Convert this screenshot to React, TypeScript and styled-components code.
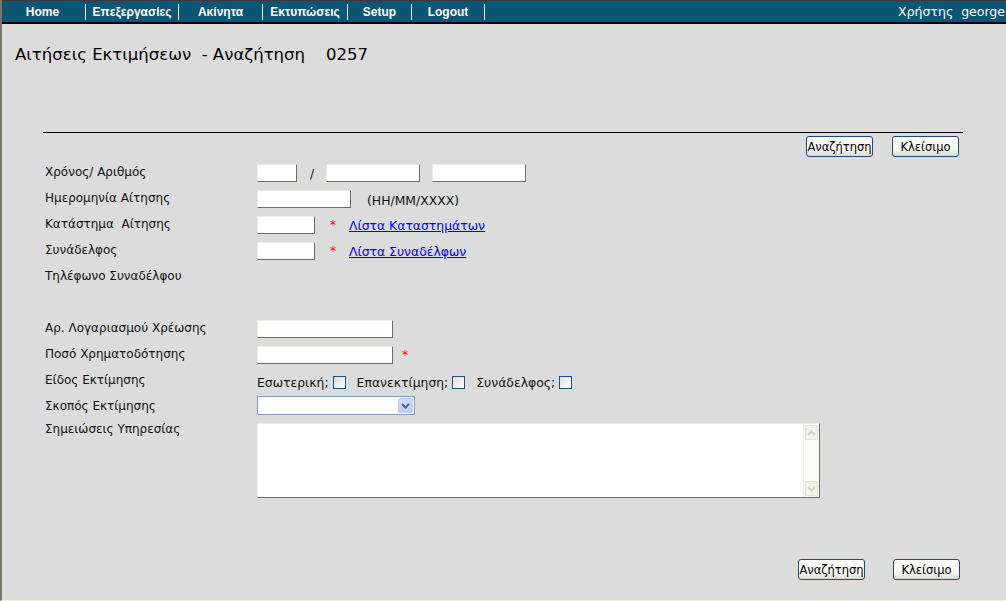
import styled, { createGlobalStyle } from 'styled-components';

const GlobalStyle = createGlobalStyle`
  html, body {
    margin: 0;
    padding: 0;
    background: #dcdcdc;
  }
  * {
    box-sizing: border-box;
  }
`;

const FONT = `"DejaVu Sans", Verdana, sans-serif`;

const navItems = [
  { label: 'Home', width: 84 },
  { label: 'Επεξεργασίες', width: 93 },
  { label: 'Ακίνητα', width: 84 },
  { label: 'Εκτυπώσεις', width: 85 },
  { label: 'Setup', width: 64 },
  { label: 'Logout', width: 73 },
];

const Chevron = ({ up, color }: { up?: boolean; color: string }) => (
  <svg width="9" height="6" viewBox="0 0 9 6">
    <path
      d={up ? 'M1 5 L4.5 1.5 L8 5' : 'M1 1 L4.5 4.5 L8 1'}
      fill="none"
      stroke={color}
      strokeWidth="2"
    />
  </svg>
);

export default function App() {
  return (
    <>
      <GlobalStyle />
      <Page>
        <NavBar>
          {navItems.map((item) => (
            <NavItem key={item.label} w={item.width}>
              {item.label}
            </NavItem>
          ))}
          <UserName>Χρήστης&nbsp;&nbsp;george</UserName>
        </NavBar>

        <Title>Αιτήσεις Εκτιμήσεων&nbsp;&nbsp;- Αναζήτηση&nbsp;&nbsp;&nbsp;&nbsp;0257</Title>

        <Content>
          <Divider />
          <ButtonBar gap={19} right={4}>
            <Button>Αναζήτηση</Button>
            <Button>Κλείσιμο</Button>
          </ButtonBar>

          <Form>
            <Label>Χρόνος/ Αριθμός</Label>
            <Field>
              <TextInput w={40} />
              <Slash>/</Slash>
              <TextInput w={94} />
              <TextInput w={94} style={{ marginLeft: 12 }} />
            </Field>

            <Label>Ημερομηνία Αίτησης</Label>
            <Field>
              <TextInput w={94} />
              <Hint>(HH/MM/XXXX)</Hint>
            </Field>

            <Label>Κατάστημα&nbsp;&nbsp;Αίτησης</Label>
            <Field>
              <TextInput w={58} />
              <Required gap={15}>*</Required>
              <Link href="#">Λίστα Καταστημάτων</Link>
            </Field>

            <Label>Συνάδελφος</Label>
            <Field>
              <TextInput w={58} />
              <Required gap={15}>*</Required>
              <Link href="#">Λίστα Συναδέλφων</Link>
            </Field>

            <Label>Τηλέφωνο Συναδέλφου</Label>
            <Field />

            <Label />
            <Field />

            <Label>Αρ. Λογαριασμού Χρέωσης</Label>
            <Field>
              <TextInput w={136} />
            </Field>

            <Label>Ποσό Χρηματοδότησης</Label>
            <Field>
              <TextInput w={136} />
              <Required gap={9}>*</Required>
            </Field>

            <Label>Είδος Εκτίμησης</Label>
            <Field>
              <CheckLabel>
                Εσωτερική;
                <CheckBox type="checkbox" />
              </CheckLabel>
              <CheckLabel>
                Επανεκτίμηση;
                <CheckBox type="checkbox" />
              </CheckLabel>
              <CheckLabel>
                Συνάδελφος;
                <CheckBox type="checkbox" />
              </CheckLabel>
            </Field>

            <Label>Σκοπός Εκτίμησης</Label>
            <Field>
              <SelectBox>
                <Select />
                <SelectArrow>
                  <Chevron color="#4d6185" />
                </SelectArrow>
              </SelectBox>
            </Field>

            <Label top>Σημειώσεις Υπηρεσίας</Label>
            <Field top>
              <TextAreaBox>
                <TextArea />
                <ScrollBar>
                  <ScrollButton>
                    <Chevron up color="#d2d2c8" />
                  </ScrollButton>
                  <ScrollButton>
                    <Chevron color="#d2d2c8" />
                  </ScrollButton>
                </ScrollBar>
              </TextAreaBox>
            </Field>
          </Form>

          <ButtonBar gap={28} right={3} bottom>
            <Button>Αναζήτηση</Button>
            <Button>Κλείσιμο</Button>
          </ButtonBar>
        </Content>
      </Page>
    </>
  );
}

const Page = styled.div`
  width: 1006px;
  height: 601px;
  display: flex;
  flex-direction: column;
  overflow: hidden;
  border-left: 2px solid #76766c;
  border-bottom: 1px solid #eeeee2;
  background: #dcdcdc;
  font-family: ${FONT};
`;

const NavBar = styled.nav`
  display: flex;
  align-items: center;
  height: 24px;
  margin-left: -2px;
  background: #0d5673;
  border-top: 1px solid #3a3a3a;
  border-bottom: 2px solid #000;
  white-space: nowrap;
`;

const NavItem = styled.div<{ w: number }>`
  flex: 0 0 ${({ w }) => w}px;
  height: 16px;
  line-height: 16px;
  text-align: center;
  color: #fff;
  font-family: "Liberation Sans", Arial, sans-serif;
  font-weight: 700;
  font-size: 12px;
  border-right: 1px solid #e8eef2;
  &:first-child {
    flex-basis: ${({ w }) => w + 2}px;
  }
`;

const UserName = styled.div`
  margin-left: auto;
  margin-right: 1px;
  color: #fff;
  font-size: 12.5px;
  font-family: ${FONT};
`;

const Title = styled.h1`
  margin: 21px 0 0 13px;
  font-size: 16.5px;
  font-weight: 400;
  color: #000;
  height: 20px;
  line-height: 20px;
  white-space: nowrap;
`;

const Content = styled.div`
  display: flex;
  flex-direction: column;
  margin: 0 43px 0 41px;
  padding-top: 67px;
`;

const Divider = styled.div`
  height: 1px;
  background: #000;
  margin-bottom: 3px;
`;

const ButtonBar = styled.div<{ gap: number; right: number; bottom?: boolean }>`
  display: flex;
  justify-content: flex-end;
  gap: ${({ gap }) => gap}px;
  padding-right: ${({ right }) => right}px;
  margin-top: ${({ bottom }) => (bottom ? '113px' : '0')};
`;

const Button = styled.button`
  width: 67px;
  height: 21px;
  padding: 0;
  border: 1px solid #1c4a7c;
  border-radius: 3px;
  background: linear-gradient(#ffffff, #f4f4f0 70%, #dcd8cc);
  font-family: ${FONT};
  font-size: 11.5px;
  color: #000;
  white-space: nowrap;
  cursor: pointer;
`;

const Form = styled.div`
  display: grid;
  grid-template-columns: 214px 1fr;
  grid-auto-rows: 26px;
  margin-top: 3px;
  font-size: 12px;
  color: #111;
`;

const Label = styled.div<{ top?: boolean }>`
  padding-left: 2px;
  display: flex;
  align-items: ${({ top }) => (top ? 'flex-start' : 'center')};
  padding-top: ${({ top }) => (top ? '4px' : '0')};
  margin-top: -2px;
  white-space: nowrap;
`;

const Field = styled.div<{ top?: boolean }>`
  display: flex;
  align-items: ${({ top }) => (top ? 'flex-start' : 'center')};
  padding-top: ${({ top }) => (top ? '3px' : '0')};
  white-space: nowrap;
  font-size: 12.4px;
`;

const TextInput = styled.input<{ w: number }>`
  width: ${({ w }) => w}px;
  height: 18px;
  padding: 0 2px;
  border: 1px solid;
  border-color: #ecebe2 #6f6d62 #6f6d62 #ecebe2;
  background: #fff;
  outline: none;
`;

const Slash = styled.span`
  width: 29px;
  padding-left: 13px;
`;

const Hint = styled.span`
  margin-left: 16px;
  margin-top: 2px;
`;

const Required = styled.span<{ gap: number }>`
  color: #f00;
  margin-left: ${({ gap }) => gap}px;
  margin-right: 13px;
  font-size: 12px;
`;

const Link = styled.a`
  color: #0000ff;
  text-decoration: underline;
`;

const CheckLabel = styled.label`
  display: flex;
  align-items: center;
  gap: 4px;
  margin-right: 11px;
  margin-top: 2px;
  font-size: 12.4px;
`;

const CheckBox = styled.input`
  appearance: none;
  width: 13px;
  height: 13px;
  margin: 0;
  border: 1px solid #1c5180;
  background: linear-gradient(135deg, #dcdcd7, #ffffff);
`;

const SelectBox = styled.div`
  display: flex;
  align-items: center;
  width: 158px;
  height: 19px;
  margin-top: -3px;
  border: 1px solid #7f9db9;
  background: #fff;
`;

const Select = styled.select`
  flex: 1;
  height: 100%;
  border: 0;
  background: transparent;
  appearance: none;
  outline: none;
`;

const SelectArrow = styled.div`
  display: flex;
  align-items: center;
  justify-content: center;
  width: 15px;
  height: 15px;
  margin-right: 1px;
  border-radius: 2px;
  background: linear-gradient(#d0ddfc, #b6cbf8);
  border: 1px solid #b8cdf6;
`;

const TextAreaBox = styled.div`
  display: flex;
  width: 563px;
  height: 75px;
  border: 1px solid;
  border-color: #f0efe4 #6f6d62 #6f6d62 #f0efe4;
  background: #fff;
`;

const TextArea = styled.textarea`
  flex: 1;
  border: 0;
  resize: none;
  outline: none;
  background: transparent;
`;

const ScrollBar = styled.div`
  display: flex;
  flex-direction: column;
  justify-content: space-between;
  width: 16px;
  background: #fcfcf8;
  border-left: 1px solid #f0efe6;
  padding: 1px 0;
`;

const ScrollButton = styled.div`
  display: flex;
  align-items: center;
  justify-content: center;
  height: 15px;
  margin: 0 1px;
  border: 1px solid #e2e1d6;
  border-radius: 2px;
  background: #f4f4ee;
`;
